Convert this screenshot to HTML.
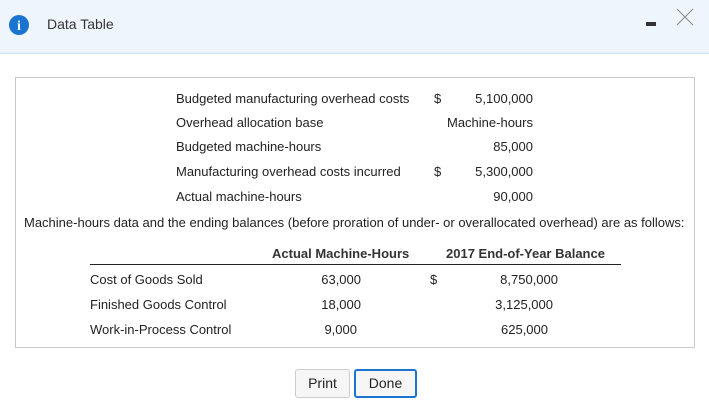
<!DOCTYPE html>
<html><head><style>
body{margin:0;width:709px;height:411px;background:#fff;font-family:"Liberation Sans",Arial,sans-serif;color:#222;position:relative;overflow:hidden}
.hdr{position:absolute;left:0;top:0;width:709px;height:53px;background:#eff5fd;border-bottom:1px solid #c5dff5}
.t{position:absolute;font-size:13px;white-space:nowrap;line-height:15px}
.r{text-align:right}
.box{position:absolute;left:15px;top:77px;width:678px;height:269px;border:1px solid #c8c8c8}
.btn{position:absolute;top:369px;height:29px;box-sizing:border-box;border:1px solid #ccc;border-radius:3px;background:#f6f6f6;font-size:14px;text-align:center;line-height:27px}
</style></head><body>
<div class="hdr">
<svg style="position:absolute;left:8px;top:14px" width="22" height="22"><circle cx="11" cy="11" r="10" fill="#1b75d0"/><text x="11" y="16" font-family="Liberation Serif" font-weight="bold" font-size="14" fill="#fff" text-anchor="middle">i</text></svg>
<div class="t" style="left:47px;top:17px;font-size:14px;color:#333">Data Table</div>
<div style="position:absolute;left:646px;top:22px;width:10px;height:4px;background:#333"></div>
<svg style="position:absolute;left:676px;top:8px" width="18" height="18"><path d="M1 1L17 17M17 1L1 17" stroke="#888" stroke-width="1"/></svg>
</div>
<div class="box"></div>
<div class="t" style="left:176px;top:91px">Budgeted manufacturing overhead costs</div>
<div class="t" style="left:434px;top:91px">$</div>
<div class="t r" style="left:440px;width:93px;top:91px">5,100,000</div>
<div class="t" style="left:176px;top:115px">Overhead allocation base</div>
<div class="t r" style="left:400px;width:133px;top:115px">Machine-hours</div>
<div class="t" style="left:176px;top:139px">Budgeted machine-hours</div>
<div class="t r" style="left:440px;width:93px;top:139px">85,000</div>
<div class="t" style="left:176px;top:164px">Manufacturing overhead costs incurred</div>
<div class="t" style="left:434px;top:164px">$</div>
<div class="t r" style="left:440px;width:93px;top:164px">5,300,000</div>
<div class="t" style="left:176px;top:189px">Actual machine-hours</div>
<div class="t r" style="left:440px;width:93px;top:189px">90,000</div>
<div class="t" style="left:24px;top:215px">Machine-hours data and the ending balances (before proration of under- or overallocated overhead) are as follows:</div>
<div class="t" style="left:272px;top:246px;font-weight:bold;color:#333">Actual Machine-Hours</div>
<div class="t" style="left:446px;top:246px;font-weight:bold;color:#333">2017 End-of-Year Balance</div>
<div style="position:absolute;left:90px;top:264px;width:531px;height:1px;background:#222"></div>
<div class="t" style="left:90px;top:272px">Cost of Goods Sold</div>
<div class="t r" style="left:280px;width:81px;top:272px">63,000</div>
<div class="t" style="left:430px;top:272px">$</div>
<div class="t r" style="left:480px;width:78px;top:272px">8,750,000</div>
<div class="t" style="left:90px;top:297px">Finished Goods Control</div>
<div class="t r" style="left:280px;width:81px;top:297px">18,000</div>
<div class="t r" style="left:480px;width:73px;top:297px">3,125,000</div>
<div class="t" style="left:90px;top:322px">Work-in-Process Control</div>
<div class="t r" style="left:280px;width:77px;top:322px">9,000</div>
<div class="t r" style="left:480px;width:68px;top:322px">625,000</div>
<div class="btn" style="left:295px;width:55px">Print</div>
<div class="btn" style="left:354px;width:63px;border:2px solid #1b75d0;line-height:25px">Done</div>
</body></html>
